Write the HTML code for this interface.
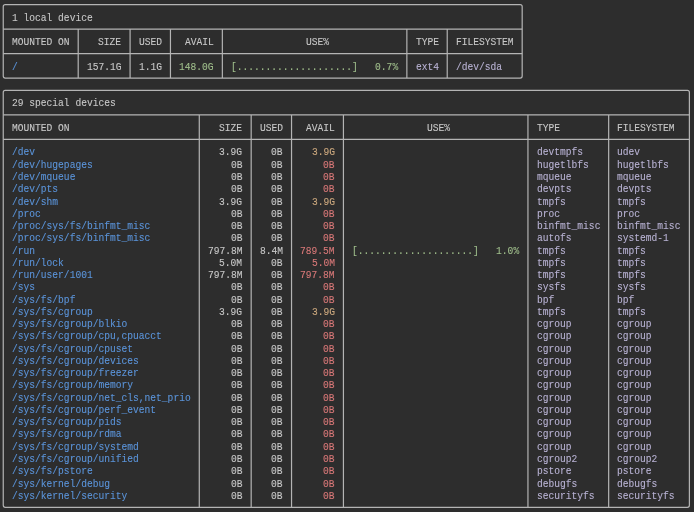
<!DOCTYPE html>
<html><head><meta charset="utf-8"><style>
html,body{margin:0;padding:0;width:694px;height:512px;overflow:hidden;background:#2d2d2d;}
#t span{position:absolute;white-space:pre;font-family:"Liberation Mono",monospace;font-size:10.1px;line-height:12.262px;height:12.262px;transform:scaleX(0.95149);transform-origin:0 0;-webkit-text-stroke:0.1px;}
#t{position:absolute;left:0;top:0;width:694px;height:512px;will-change:transform;-webkit-font-smoothing:antialiased;}
svg{position:absolute;left:0;top:0;}
</style></head><body>
<svg width="694" height="512" viewBox="0 0 694 512"><g fill="none" stroke="#b4b4b4" stroke-width="1.2">
<path d="M5.24,4.55 H520.18 Q522.18,4.55 522.18,6.55 V76.12 Q522.18,78.12 520.18,78.12 H5.24 Q3.24,78.12 3.24,76.12 V6.55 Q3.24,4.55 5.24,4.55 Z"/>
<path d="M3.24,29.07 L522.18,29.07"/>
<path d="M3.24,53.60 L522.18,53.60"/>
<path d="M78.20,29.07 L78.20,78.12"/>
<path d="M130.09,29.07 L130.09,78.12"/>
<path d="M170.45,29.07 L170.45,78.12"/>
<path d="M222.35,29.07 L222.35,78.12"/>
<path d="M406.86,29.07 L406.86,78.12"/>
<path d="M447.22,29.07 L447.22,78.12"/>
<path d="M5.24,90.38 H687.39 Q689.39,90.38 689.39,92.38 V505.29 Q689.39,507.29 687.39,507.29 H5.24 Q3.24,507.29 3.24,505.29 V92.38 Q3.24,90.38 5.24,90.38 Z"/>
<path d="M3.24,114.91 L689.39,114.91"/>
<path d="M3.24,139.43 L689.39,139.43"/>
<path d="M199.28,114.91 L199.28,507.29"/>
<path d="M251.18,114.91 L251.18,507.29"/>
<path d="M291.54,114.91 L291.54,507.29"/>
<path d="M343.43,114.91 L343.43,507.29"/>
<path d="M527.95,114.91 L527.95,507.29"/>
<path d="M608.67,114.91 L608.67,507.29"/>
</g></svg>
<div id="t">
<span style="left:11.89px;top:12.58px;color:#c8c8c8">1 local device</span>
<span style="left:11.89px;top:37.10px;color:#c8c8c8">MOUNTED ON</span>
<span style="left:98.38px;top:37.10px;color:#c8c8c8">SIZE</span>
<span style="left:138.74px;top:37.10px;color:#c8c8c8">USED</span>
<span style="left:184.87px;top:37.10px;color:#c8c8c8">AVAIL</span>
<span style="left:305.96px;top:37.10px;color:#c8c8c8">USE%</span>
<span style="left:415.51px;top:37.10px;color:#c8c8c8">TYPE</span>
<span style="left:455.87px;top:37.10px;color:#c8c8c8">FILESYSTEM</span>
<span style="left:11.89px;top:61.63px;color:#5b94da">/</span>
<span style="left:86.85px;top:61.63px;color:#c8c8c8">157.1G</span>
<span style="left:138.74px;top:61.63px;color:#c8c8c8">1.1G</span>
<span style="left:179.10px;top:61.63px;color:#a0bf8c">148.0G</span>
<span style="left:231.00px;top:61.63px;color:#a0bf8c">[....................]   0.7%</span>
<span style="left:415.51px;top:61.63px;color:#b9b3d4">ext4</span>
<span style="left:455.87px;top:61.63px;color:#b9b3d4">/dev/sda</span>
<span style="left:11.89px;top:98.42px;color:#c8c8c8">29 special devices</span>
<span style="left:11.89px;top:122.94px;color:#c8c8c8">MOUNTED ON</span>
<span style="left:219.47px;top:122.94px;color:#c8c8c8">SIZE</span>
<span style="left:259.83px;top:122.94px;color:#c8c8c8">USED</span>
<span style="left:305.96px;top:122.94px;color:#c8c8c8">AVAIL</span>
<span style="left:427.04px;top:122.94px;color:#c8c8c8">USE%</span>
<span style="left:536.60px;top:122.94px;color:#c8c8c8">TYPE</span>
<span style="left:617.32px;top:122.94px;color:#c8c8c8">FILESYSTEM</span>
<span style="left:11.89px;top:147.46px;color:#5b94da">/dev</span>
<span style="left:219.47px;top:147.46px;color:#c8c8c8">3.9G</span>
<span style="left:271.36px;top:147.46px;color:#c8c8c8">0B</span>
<span style="left:311.72px;top:147.46px;color:#cca87e">3.9G</span>
<span style="left:536.60px;top:147.46px;color:#b9b3d4">devtmpfs</span>
<span style="left:617.32px;top:147.46px;color:#b9b3d4">udev</span>
<span style="left:11.89px;top:159.73px;color:#5b94da">/dev/hugepages</span>
<span style="left:231.00px;top:159.73px;color:#c8c8c8">0B</span>
<span style="left:271.36px;top:159.73px;color:#c8c8c8">0B</span>
<span style="left:323.25px;top:159.73px;color:#d87878">0B</span>
<span style="left:536.60px;top:159.73px;color:#b9b3d4">hugetlbfs</span>
<span style="left:617.32px;top:159.73px;color:#b9b3d4">hugetlbfs</span>
<span style="left:11.89px;top:171.99px;color:#5b94da">/dev/mqueue</span>
<span style="left:231.00px;top:171.99px;color:#c8c8c8">0B</span>
<span style="left:271.36px;top:171.99px;color:#c8c8c8">0B</span>
<span style="left:323.25px;top:171.99px;color:#d87878">0B</span>
<span style="left:536.60px;top:171.99px;color:#b9b3d4">mqueue</span>
<span style="left:617.32px;top:171.99px;color:#b9b3d4">mqueue</span>
<span style="left:11.89px;top:184.25px;color:#5b94da">/dev/pts</span>
<span style="left:231.00px;top:184.25px;color:#c8c8c8">0B</span>
<span style="left:271.36px;top:184.25px;color:#c8c8c8">0B</span>
<span style="left:323.25px;top:184.25px;color:#d87878">0B</span>
<span style="left:536.60px;top:184.25px;color:#b9b3d4">devpts</span>
<span style="left:617.32px;top:184.25px;color:#b9b3d4">devpts</span>
<span style="left:11.89px;top:196.51px;color:#5b94da">/dev/shm</span>
<span style="left:219.47px;top:196.51px;color:#c8c8c8">3.9G</span>
<span style="left:271.36px;top:196.51px;color:#c8c8c8">0B</span>
<span style="left:311.72px;top:196.51px;color:#cca87e">3.9G</span>
<span style="left:536.60px;top:196.51px;color:#b9b3d4">tmpfs</span>
<span style="left:617.32px;top:196.51px;color:#b9b3d4">tmpfs</span>
<span style="left:11.89px;top:208.77px;color:#5b94da">/proc</span>
<span style="left:231.00px;top:208.77px;color:#c8c8c8">0B</span>
<span style="left:271.36px;top:208.77px;color:#c8c8c8">0B</span>
<span style="left:323.25px;top:208.77px;color:#d87878">0B</span>
<span style="left:536.60px;top:208.77px;color:#b9b3d4">proc</span>
<span style="left:617.32px;top:208.77px;color:#b9b3d4">proc</span>
<span style="left:11.89px;top:221.04px;color:#5b94da">/proc/sys/fs/binfmt_misc</span>
<span style="left:231.00px;top:221.04px;color:#c8c8c8">0B</span>
<span style="left:271.36px;top:221.04px;color:#c8c8c8">0B</span>
<span style="left:323.25px;top:221.04px;color:#d87878">0B</span>
<span style="left:536.60px;top:221.04px;color:#b9b3d4">binfmt_misc</span>
<span style="left:617.32px;top:221.04px;color:#b9b3d4">binfmt_misc</span>
<span style="left:11.89px;top:233.30px;color:#5b94da">/proc/sys/fs/binfmt_misc</span>
<span style="left:231.00px;top:233.30px;color:#c8c8c8">0B</span>
<span style="left:271.36px;top:233.30px;color:#c8c8c8">0B</span>
<span style="left:323.25px;top:233.30px;color:#d87878">0B</span>
<span style="left:536.60px;top:233.30px;color:#b9b3d4">autofs</span>
<span style="left:617.32px;top:233.30px;color:#b9b3d4">systemd-1</span>
<span style="left:11.89px;top:245.56px;color:#5b94da">/run</span>
<span style="left:207.93px;top:245.56px;color:#c8c8c8">797.8M</span>
<span style="left:259.83px;top:245.56px;color:#c8c8c8">8.4M</span>
<span style="left:300.19px;top:245.56px;color:#d87878">789.5M</span>
<span style="left:352.08px;top:245.56px;color:#a0bf8c">[....................]   1.0%</span>
<span style="left:536.60px;top:245.56px;color:#b9b3d4">tmpfs</span>
<span style="left:617.32px;top:245.56px;color:#b9b3d4">tmpfs</span>
<span style="left:11.89px;top:257.82px;color:#5b94da">/run/lock</span>
<span style="left:219.47px;top:257.82px;color:#c8c8c8">5.0M</span>
<span style="left:271.36px;top:257.82px;color:#c8c8c8">0B</span>
<span style="left:311.72px;top:257.82px;color:#d87878">5.0M</span>
<span style="left:536.60px;top:257.82px;color:#b9b3d4">tmpfs</span>
<span style="left:617.32px;top:257.82px;color:#b9b3d4">tmpfs</span>
<span style="left:11.89px;top:270.08px;color:#5b94da">/run/user/1001</span>
<span style="left:207.93px;top:270.08px;color:#c8c8c8">797.8M</span>
<span style="left:271.36px;top:270.08px;color:#c8c8c8">0B</span>
<span style="left:300.19px;top:270.08px;color:#d87878">797.8M</span>
<span style="left:536.60px;top:270.08px;color:#b9b3d4">tmpfs</span>
<span style="left:617.32px;top:270.08px;color:#b9b3d4">tmpfs</span>
<span style="left:11.89px;top:282.35px;color:#5b94da">/sys</span>
<span style="left:231.00px;top:282.35px;color:#c8c8c8">0B</span>
<span style="left:271.36px;top:282.35px;color:#c8c8c8">0B</span>
<span style="left:323.25px;top:282.35px;color:#d87878">0B</span>
<span style="left:536.60px;top:282.35px;color:#b9b3d4">sysfs</span>
<span style="left:617.32px;top:282.35px;color:#b9b3d4">sysfs</span>
<span style="left:11.89px;top:294.61px;color:#5b94da">/sys/fs/bpf</span>
<span style="left:231.00px;top:294.61px;color:#c8c8c8">0B</span>
<span style="left:271.36px;top:294.61px;color:#c8c8c8">0B</span>
<span style="left:323.25px;top:294.61px;color:#d87878">0B</span>
<span style="left:536.60px;top:294.61px;color:#b9b3d4">bpf</span>
<span style="left:617.32px;top:294.61px;color:#b9b3d4">bpf</span>
<span style="left:11.89px;top:306.87px;color:#5b94da">/sys/fs/cgroup</span>
<span style="left:219.47px;top:306.87px;color:#c8c8c8">3.9G</span>
<span style="left:271.36px;top:306.87px;color:#c8c8c8">0B</span>
<span style="left:311.72px;top:306.87px;color:#cca87e">3.9G</span>
<span style="left:536.60px;top:306.87px;color:#b9b3d4">tmpfs</span>
<span style="left:617.32px;top:306.87px;color:#b9b3d4">tmpfs</span>
<span style="left:11.89px;top:319.13px;color:#5b94da">/sys/fs/cgroup/blkio</span>
<span style="left:231.00px;top:319.13px;color:#c8c8c8">0B</span>
<span style="left:271.36px;top:319.13px;color:#c8c8c8">0B</span>
<span style="left:323.25px;top:319.13px;color:#d87878">0B</span>
<span style="left:536.60px;top:319.13px;color:#b9b3d4">cgroup</span>
<span style="left:617.32px;top:319.13px;color:#b9b3d4">cgroup</span>
<span style="left:11.89px;top:331.39px;color:#5b94da">/sys/fs/cgroup/cpu,cpuacct</span>
<span style="left:231.00px;top:331.39px;color:#c8c8c8">0B</span>
<span style="left:271.36px;top:331.39px;color:#c8c8c8">0B</span>
<span style="left:323.25px;top:331.39px;color:#d87878">0B</span>
<span style="left:536.60px;top:331.39px;color:#b9b3d4">cgroup</span>
<span style="left:617.32px;top:331.39px;color:#b9b3d4">cgroup</span>
<span style="left:11.89px;top:343.65px;color:#5b94da">/sys/fs/cgroup/cpuset</span>
<span style="left:231.00px;top:343.65px;color:#c8c8c8">0B</span>
<span style="left:271.36px;top:343.65px;color:#c8c8c8">0B</span>
<span style="left:323.25px;top:343.65px;color:#d87878">0B</span>
<span style="left:536.60px;top:343.65px;color:#b9b3d4">cgroup</span>
<span style="left:617.32px;top:343.65px;color:#b9b3d4">cgroup</span>
<span style="left:11.89px;top:355.92px;color:#5b94da">/sys/fs/cgroup/devices</span>
<span style="left:231.00px;top:355.92px;color:#c8c8c8">0B</span>
<span style="left:271.36px;top:355.92px;color:#c8c8c8">0B</span>
<span style="left:323.25px;top:355.92px;color:#d87878">0B</span>
<span style="left:536.60px;top:355.92px;color:#b9b3d4">cgroup</span>
<span style="left:617.32px;top:355.92px;color:#b9b3d4">cgroup</span>
<span style="left:11.89px;top:368.18px;color:#5b94da">/sys/fs/cgroup/freezer</span>
<span style="left:231.00px;top:368.18px;color:#c8c8c8">0B</span>
<span style="left:271.36px;top:368.18px;color:#c8c8c8">0B</span>
<span style="left:323.25px;top:368.18px;color:#d87878">0B</span>
<span style="left:536.60px;top:368.18px;color:#b9b3d4">cgroup</span>
<span style="left:617.32px;top:368.18px;color:#b9b3d4">cgroup</span>
<span style="left:11.89px;top:380.44px;color:#5b94da">/sys/fs/cgroup/memory</span>
<span style="left:231.00px;top:380.44px;color:#c8c8c8">0B</span>
<span style="left:271.36px;top:380.44px;color:#c8c8c8">0B</span>
<span style="left:323.25px;top:380.44px;color:#d87878">0B</span>
<span style="left:536.60px;top:380.44px;color:#b9b3d4">cgroup</span>
<span style="left:617.32px;top:380.44px;color:#b9b3d4">cgroup</span>
<span style="left:11.89px;top:392.70px;color:#5b94da">/sys/fs/cgroup/net_cls,net_prio</span>
<span style="left:231.00px;top:392.70px;color:#c8c8c8">0B</span>
<span style="left:271.36px;top:392.70px;color:#c8c8c8">0B</span>
<span style="left:323.25px;top:392.70px;color:#d87878">0B</span>
<span style="left:536.60px;top:392.70px;color:#b9b3d4">cgroup</span>
<span style="left:617.32px;top:392.70px;color:#b9b3d4">cgroup</span>
<span style="left:11.89px;top:404.97px;color:#5b94da">/sys/fs/cgroup/perf_event</span>
<span style="left:231.00px;top:404.97px;color:#c8c8c8">0B</span>
<span style="left:271.36px;top:404.97px;color:#c8c8c8">0B</span>
<span style="left:323.25px;top:404.97px;color:#d87878">0B</span>
<span style="left:536.60px;top:404.97px;color:#b9b3d4">cgroup</span>
<span style="left:617.32px;top:404.97px;color:#b9b3d4">cgroup</span>
<span style="left:11.89px;top:417.23px;color:#5b94da">/sys/fs/cgroup/pids</span>
<span style="left:231.00px;top:417.23px;color:#c8c8c8">0B</span>
<span style="left:271.36px;top:417.23px;color:#c8c8c8">0B</span>
<span style="left:323.25px;top:417.23px;color:#d87878">0B</span>
<span style="left:536.60px;top:417.23px;color:#b9b3d4">cgroup</span>
<span style="left:617.32px;top:417.23px;color:#b9b3d4">cgroup</span>
<span style="left:11.89px;top:429.49px;color:#5b94da">/sys/fs/cgroup/rdma</span>
<span style="left:231.00px;top:429.49px;color:#c8c8c8">0B</span>
<span style="left:271.36px;top:429.49px;color:#c8c8c8">0B</span>
<span style="left:323.25px;top:429.49px;color:#d87878">0B</span>
<span style="left:536.60px;top:429.49px;color:#b9b3d4">cgroup</span>
<span style="left:617.32px;top:429.49px;color:#b9b3d4">cgroup</span>
<span style="left:11.89px;top:441.75px;color:#5b94da">/sys/fs/cgroup/systemd</span>
<span style="left:231.00px;top:441.75px;color:#c8c8c8">0B</span>
<span style="left:271.36px;top:441.75px;color:#c8c8c8">0B</span>
<span style="left:323.25px;top:441.75px;color:#d87878">0B</span>
<span style="left:536.60px;top:441.75px;color:#b9b3d4">cgroup</span>
<span style="left:617.32px;top:441.75px;color:#b9b3d4">cgroup</span>
<span style="left:11.89px;top:454.01px;color:#5b94da">/sys/fs/cgroup/unified</span>
<span style="left:231.00px;top:454.01px;color:#c8c8c8">0B</span>
<span style="left:271.36px;top:454.01px;color:#c8c8c8">0B</span>
<span style="left:323.25px;top:454.01px;color:#d87878">0B</span>
<span style="left:536.60px;top:454.01px;color:#b9b3d4">cgroup2</span>
<span style="left:617.32px;top:454.01px;color:#b9b3d4">cgroup2</span>
<span style="left:11.89px;top:466.27px;color:#5b94da">/sys/fs/pstore</span>
<span style="left:231.00px;top:466.27px;color:#c8c8c8">0B</span>
<span style="left:271.36px;top:466.27px;color:#c8c8c8">0B</span>
<span style="left:323.25px;top:466.27px;color:#d87878">0B</span>
<span style="left:536.60px;top:466.27px;color:#b9b3d4">pstore</span>
<span style="left:617.32px;top:466.27px;color:#b9b3d4">pstore</span>
<span style="left:11.89px;top:478.54px;color:#5b94da">/sys/kernel/debug</span>
<span style="left:231.00px;top:478.54px;color:#c8c8c8">0B</span>
<span style="left:271.36px;top:478.54px;color:#c8c8c8">0B</span>
<span style="left:323.25px;top:478.54px;color:#d87878">0B</span>
<span style="left:536.60px;top:478.54px;color:#b9b3d4">debugfs</span>
<span style="left:617.32px;top:478.54px;color:#b9b3d4">debugfs</span>
<span style="left:11.89px;top:490.80px;color:#5b94da">/sys/kernel/security</span>
<span style="left:231.00px;top:490.80px;color:#c8c8c8">0B</span>
<span style="left:271.36px;top:490.80px;color:#c8c8c8">0B</span>
<span style="left:323.25px;top:490.80px;color:#d87878">0B</span>
<span style="left:536.60px;top:490.80px;color:#b9b3d4">securityfs</span>
<span style="left:617.32px;top:490.80px;color:#b9b3d4">securityfs</span>
</div>
</body></html>
